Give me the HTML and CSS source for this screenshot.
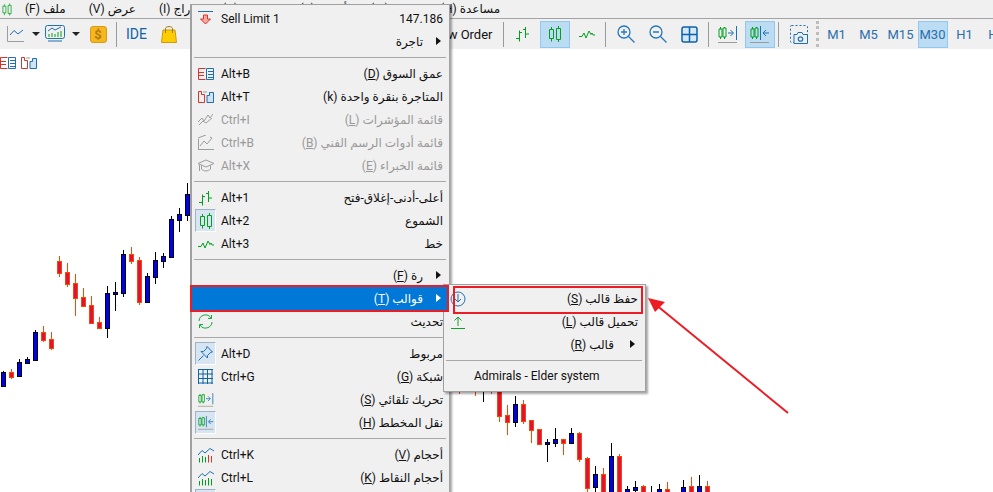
FILE: index.html
```html
<!DOCTYPE html>
<html lang="ar">
<head>
    <meta charset="UTF-8">
    <meta name="viewport" content="width=device-width, initial-scale=1.0">
    <title>MetaTrader</title>
    <link rel="stylesheet" href="styles.css">
</head>
<body>
<svg class="defs" width="0" height="0">
    <symbol id="i-bars" viewBox="0 0 16 16"><path class="g" d="M4.5 4.5V15.5M1 12.5H4.5M4.5 6.5H7M10.5 1V12M8 3.5H10.5M10.5 8H14"/></symbol>
    <symbol id="i-candles" viewBox="0 0 16 16"><path class="g" d="M4.5 1V3.5M4.5 12.5V15.5M11.5 0V2.5M11.5 13.5V16M2.5 3.5H6.5V12.5H2.5ZM9.5 2.5H13.5V13.5H9.5Z"/></symbol>
    <symbol id="i-line" viewBox="0 0 16 16"><path class="g" d="M0 10.5H3L5 7L7 12L10 5L12 8.5L13 7L14 9H16"/></symbol>
    <symbol id="i-shift" viewBox="0 0 20 18"><path class="g" d="M2.500 2V4M2.500 12V14M6.500 2V3M6.500 12V14M1 4H4V12H1ZM5 3H8V12H5Z"/><path class="b" d="M10 8H15M12.500 5L15.500 8L12.500 11M18.500 1V15"/><path class="s" d="M0 17.500H19"/></symbol>
    <symbol id="i-auto" viewBox="0 0 20 18"><path class="g" d="M2.500 2V4M2.500 12V14M6.500 2V3M6.500 12V14M1 4H4V12H1ZM5 3H8V12H5Z"/><path class="b" d="M10.500 1V15M19 8H13.500M16 5L13 8L16 11"/><path class="s" d="M0 17.500H19"/></symbol>
    <symbol id="i-depth" viewBox="0 0 16 12"><path class="r" d="M7.500 .5H.5V11.500H7.500M.5 4.500H6M.5 7.500H6"/><path class="b" d="M8.500 .5H15.500V11.500H8.500ZM10 3.500H15M10 6.500H15M10 9.500H15"/></symbol>
    <symbol id="i-click" viewBox="0 0 16 12"><path class="r" d="M.5 .5H3.500V3.500H6.500V11.500H.5Z"/><path class="fb" d="M9 11.500V4.500H11.500V1.500H15.500V11.500Z"/><path class="s" d="M5 1H9"/></symbol>
    <symbol id="i-volume" viewBox="0 0 16 16"><path class="b" d="M0 8L4 3.500L7 6L12 1.500L16 4"/><path class="g" d="M1.500 15.500V11M4.500 15.500V9M7.500 15.500V10"/><path class="r" d="M10.500 15.500V8M13.500 15.500V9"/></symbol>
    <symbol id="i-volume-g" viewBox="0 0 16 16"><path class="b" d="M0 8L4 3.500L7 6L12 1.500L16 4"/><path class="g" d="M1.500 15.500V11M4.500 15.500V9M7.500 15.500V10M10.500 15.500V8M13.500 15.500V9"/></symbol>
</svg>

<div class="app">
    <div class="menubar">
        <svg class="menubar-icon" width="12" height="13"><use href="#i-candles"/></svg>
        <span dir="rtl">ملف (F)</span>
        <span dir="rtl">عرض (V)</span>
        <span dir="rtl">إدراج (I)</span>
        <span dir="rtl">مخطط (C)</span>
        <span dir="rtl">أدوات (T)</span>
        <span dir="rtl">نوافذ (W)</span>
        <span dir="rtl" class="help">مساعدة (H)</span>
    </div>

    <div class="toolbar">
        <div class="toolbar-left">
            <button class="tool tool-caret">
                <svg width="18" height="16" viewBox="0 0 18 16"><path class="s" d="M.5 0V15.500H17"/><path class="b" d="M3 9L7 4.500L11 8L16 4"/></svg>
                <i class="caret"></i>
            </button>
            <button class="tool tool-caret">
                <svg width="20" height="18" viewBox="0 0 20 18"><rect class="b" x=".5" y=".5" width="19" height="13" rx="2"/><path class="b" d="M3 6L7 3L10 5L16 2M3 16H17"/><path class="g" d="M4 12V9M7 12V8M10 12V9M13 12V7M16 12V6"/></svg>
                <i class="caret"></i>
            </button>
            <button class="tool"><span class="coin">$</span></button>
            <span class="sep"></span>
            <button class="tool tool-text">IDE</button>
            <button class="tool">
                <svg width="16" height="18" viewBox="0 0 16 18"><path d="M2 5H14L15.500 17.500H.5Z" fill="#ffcc00" stroke="#c99a10"/><path d="M4.500 8V3.500C4.500 1 11.500 1 11.500 3.500V8" fill="none" stroke="#9a7b10"/></svg>
            </button>
            <span class="new-order">New Order</span>
        </div>
        <span class="sep"></span>
        <button class="tool"><svg width="16" height="16"><use href="#i-bars"/></svg></button>
        <button class="tool active"><svg width="16" height="16"><use href="#i-candles"/></svg></button>
        <button class="tool"><svg width="18" height="16"><use href="#i-line"/></svg></button>
        <span class="sep"></span>
        <button class="tool">
            <svg width="18" height="18" viewBox="0 0 18 18"><circle class="mag" cx="7" cy="7" r="6"/><path class="mag" d="M4 7H10M7 4V10M11.500 11.500L17.500 17.500"/></svg>
        </button>
        <button class="tool">
            <svg width="18" height="18" viewBox="0 0 18 18"><circle class="mag" cx="7" cy="7" r="6"/><path class="mag" d="M4 7H10M11.500 11.500L17.500 17.500"/></svg>
        </button>
        <button class="tool">
            <svg width="17" height="17" viewBox="0 0 17 17"><rect x="1" y="1" width="15" height="15" rx="2" fill="#d3e8f8" stroke="#0f62a5" stroke-width="1.500"/><path d="M8.500 1V16M1 8.500H16" stroke="#0f62a5" stroke-width="1.500"/></svg>
        </button>
        <span class="sep"></span>
        <button class="tool"><svg width="20" height="18"><use href="#i-shift"/></svg></button>
        <button class="tool active"><svg width="20" height="18"><use href="#i-auto"/></svg></button>
        <span class="sep"></span>
        <button class="tool">
            <svg width="18" height="19" viewBox="0 0 18 19"><rect x=".5" y=".5" width="17" height="17" rx="1" fill="none" stroke="#1f6fb2" stroke-dasharray="2 2"/><path d="M4 18.500V9.500H7L8 7.500H12L13 9.500H17.500V18.500Z" fill="#f0f0f0" stroke="#1f6fb2"/><circle class="mag" cx="10.500" cy="14" r="2.200"/></svg>
        </button>
        <span class="grip"></span>
        <button class="tool tool-period">M1</button>
        <button class="tool tool-period">M5</button>
        <button class="tool tool-period">M15</button>
        <button class="tool tool-period active">M30</button>
        <button class="tool tool-period">H1</button>
        <button class="tool tool-period">H4</button>
    </div>

    <div class="chart">
        <div class="chart-tools">
            <svg width="16" height="12"><use href="#i-depth"/></svg>
            <svg width="16" height="12"><use href="#i-click"/></svg>
        </div>
        <svg id="candles" class="candles" viewBox="0 49 993 443"></svg>
    </div>

    <div class="menu">
        <div class="row">
            <span class="row-icon">
                <svg width="16" height="16" viewBox="0 0 16 16"><path d="M0 .5H15" stroke="#1f6fb2"/><path d="M5.500 4H9.500V8H12.500L7.500 13L2.500 8H5.500Z" fill="#f7a8a0" stroke="#d9342b"/></svg>
            </span>
            <span class="row-key">Sell Limit 1</span>
            <span class="row-label">147.186</span>
        </div>
        <div class="row row-sub"><span class="row-icon"></span><span class="row-key"></span><span class="row-label" dir="rtl">تاجرة</span></div>
        <div class="menu-sep"></div>

        <div class="row">
            <span class="row-icon"><svg width="16" height="12"><use href="#i-depth"/></svg></span>
            <span class="row-key">Alt+B</span>
            <span class="row-label" dir="rtl">عمق السوق (<u>D</u>)</span>
        </div>
        <div class="row">
            <span class="row-icon"><svg width="16" height="12"><use href="#i-click"/></svg></span>
            <span class="row-key">Alt+T</span>
            <span class="row-label" dir="rtl">المتاجرة بنقرة واحدة (k)</span>
        </div>
        <div class="row disabled">
            <span class="row-icon">
                <svg width="15" height="13" viewBox="0 0 15 13"><path class="s" d="M0 9L4 5L6 8L10 2L12 5L15 1M1 12L5 8L8 10L14 5"/></svg>
            </span>
            <span class="row-key">Ctrl+I</span>
            <span class="row-label" dir="rtl">قائمة المؤشرات (<u>L</u>)</span>
        </div>
        <div class="row disabled">
            <span class="row-icon">
                <svg width="16" height="15" viewBox="0 0 16 15"><path class="s" d="M0 3L8 0M.5 4V14.500M0 14.500H16M2 11L6 6L9 9L14 3L12 2"/></svg>
            </span>
            <span class="row-key">Ctrl+B</span>
            <span class="row-label" dir="rtl">قائمة أدوات الرسم الفني (<u>B</u>)</span>
        </div>
        <div class="row disabled">
            <span class="row-icon">
                <svg width="16" height="14" viewBox="0 0 16 14"><path class="s" d="M0 4.500L8 1L16 4.500L8 8ZM3.500 6.500V10C5 12.500 11 12.500 12.500 10V6.500M1.500 5.500V12"/></svg>
            </span>
            <span class="row-key">Alt+X</span>
            <span class="row-label" dir="rtl">قائمة الخبراء (<u>E</u>)</span>
        </div>
        <div class="menu-sep"></div>

        <div class="row">
            <span class="row-icon"><svg width="16" height="16"><use href="#i-bars"/></svg></span>
            <span class="row-key">Alt+1</span>
            <span class="row-label" dir="rtl">أعلى-أدنى-إغلاق-فتح</span>
        </div>
        <div class="row">
            <span class="row-icon on"><svg width="16" height="16"><use href="#i-candles"/></svg></span>
            <span class="row-key">Alt+2</span>
            <span class="row-label" dir="rtl">الشموع</span>
        </div>
        <div class="row">
            <span class="row-icon"><svg width="16" height="16"><use href="#i-line"/></svg></span>
            <span class="row-key">Alt+3</span>
            <span class="row-label" dir="rtl">خط</span>
        </div>
        <div class="menu-sep"></div>

        <div class="row row-sub"><span class="row-icon"></span><span class="row-key"></span><span class="row-label" dir="rtl">رة (<u>F</u>)</span></div>
        <div class="row row-sub selected"><span class="row-icon"></span><span class="row-key"></span><span class="row-label" dir="rtl">قوالب (<u>T</u>)</span></div>
        <div class="row">
            <span class="row-icon">
                <svg width="15" height="15" viewBox="0 0 15 15"><path d="M1 7A6.500 6.500 0 0 1 13 4M14 8A6.500 6.500 0 0 1 2 11M13.500 1V4.500H10M1.500 14V10.500H5" fill="none" stroke="#18a83c"/></svg>
            </span>
            <span class="row-key"></span>
            <span class="row-label" dir="rtl">تحديث</span>
        </div>
        <div class="menu-sep"></div>

        <div class="row">
            <span class="row-icon on">
                <svg width="15" height="15" viewBox="0 0 15 15"><path d="M9 .5L14.500 6L12.500 6.500L9.500 9.500L9.500 12L3 5.500L5.500 5.500L8.500 2.500ZM5.500 9.500L.5 14.500" fill="#cfe3f5" stroke="#1f6fb2"/></svg>
            </span>
            <span class="row-key">Alt+D</span>
            <span class="row-label" dir="rtl">مربوط</span>
        </div>
        <div class="row">
            <span class="row-icon">
                <svg width="15" height="15" viewBox="0 0 15 15"><path d="M0 .5H15M0 5H15M0 9.500H15M0 14H15M.5 0V15M5 0V15M9.500 0V15M14 0V15" stroke="#0f62a5"/></svg>
            </span>
            <span class="row-key">Ctrl+G</span>
            <span class="row-label" dir="rtl">شبكة (<u>G</u>)</span>
        </div>
        <div class="row">
            <span class="row-icon"><svg width="16" height="15"><use href="#i-shift"/></svg></span>
            <span class="row-key"></span>
            <span class="row-label" dir="rtl">تحريك تلقائي (<u>S</u>)</span>
        </div>
        <div class="row">
            <span class="row-icon on"><svg width="16" height="15"><use href="#i-auto"/></svg></span>
            <span class="row-key"></span>
            <span class="row-label" dir="rtl">نقل المخطط (<u>H</u>)</span>
        </div>
        <div class="menu-sep"></div>

        <div class="row">
            <span class="row-icon"><svg width="16" height="16"><use href="#i-volume"/></svg></span>
            <span class="row-key">Ctrl+K</span>
            <span class="row-label" dir="rtl">أحجام (<u>V</u>)</span>
        </div>
        <div class="row">
            <span class="row-icon"><svg width="16" height="16"><use href="#i-volume-g"/></svg></span>
            <span class="row-key">Ctrl+L</span>
            <span class="row-label" dir="rtl">أحجام النقاط (<u>K</u>)</span>
        </div>
        <div class="row"><span class="row-icon on"></span></div>
    </div>

    <div class="menu submenu">
        <div class="row">
            <span class="row-icon">
                <svg width="16" height="16" viewBox="0 0 16 16"><circle cx="8" cy="8" r="7" fill="none" stroke="#1f6fb2"/><path d="M8 3V11M5 8L8 11L11 8" fill="none" stroke="#1f6fb2"/></svg>
            </span>
            <span class="row-key"></span>
            <span class="row-label" dir="rtl">حفظ قالب (<u>S</u>)</span>
        </div>
        <div class="row">
            <span class="row-icon">
                <svg width="14" height="14" viewBox="0 0 14 14"><path d="M7 11V2M3.500 5.500L7 2L10.500 5.500M0 13.500H14" fill="none" stroke="#12a02c"/></svg>
            </span>
            <span class="row-key"></span>
            <span class="row-label" dir="rtl">تحميل قالب (<u>L</u>)</span>
        </div>
        <div class="row row-sub"><span class="row-icon"></span><span class="row-key"></span><span class="row-label" dir="rtl">قالب (<u>R</u>)</span></div>
        <div class="menu-sep"></div>
        <div class="row row-plain">Admirals - Elder system</div>
    </div>

    <svg class="marks" viewBox="0 0 993 492">
        <rect x="191" y="286" width="257" height="25"/>
        <rect x="454" y="287" width="188" height="26"/>
        <path d="M788 413L655 304"/>
        <polygon points="648,298 665,302 655,312"/>
    </svg>
</div>

<script src="chart.js"></script>
</body>
</html>
```

FILE: styles.css
```css
* {
    box-sizing: border-box;
}

body {
    margin: 0;
    background: white;
    font-family: Roboto, "DejaVu Sans", sans-serif;
    font-size: 12px;
    color: #111;
}

.defs {
    position: absolute;
}

.app {
    position: relative;
    width: 993px;
    height: 492px;
    overflow: hidden;
    display: flex;
    flex-direction: column;
}

svg {
    display: block;
}

/* colours shared by the drawn icons */
.g, .b, .r, .s, .mag {
    fill: none;
}
.g { stroke: #00a01e; }
.b { stroke: #1f6fb2; }
.r { stroke: #d9342b; }
.s { stroke: #9c9c9c; }
.mag { stroke: #2a77b5; stroke-width: 1.3; }
.fb { fill: #cfe3f5; stroke: #1f6fb2; }

.menubar {
    height: 19px;
    flex-shrink: 0;
    display: flex;
    align-items: center;
    gap: 23px;
    padding-left: 1px;
    background: #f0f0f0;
    border-bottom: 1px solid #a3a3a3;
    white-space: nowrap;
    line-height: 18px;
}

.menubar-icon {
    margin-right: -11px;
}

.toolbar {
    height: 30px;
    flex-shrink: 0;
    display: flex;
    align-items: center;
    background: #f0f0f0;
    white-space: nowrap;
}

.toolbar-left {
    flex: 0 0 500.5px;
    display: flex;
    align-items: center;
    padding-left: 4px;
}

.tool {
    flex-shrink: 0;
    width: 30px;
    height: 27px;
    margin: 0 1px;
    padding: 0;
    display: flex;
    align-items: center;
    justify-content: center;
    gap: 7px;
    background: none;
    border: 1px solid transparent;
    font: inherit;
}

.tool.active {
    background: #bcdcf4;
    border-color: #90c8f0;
}

.tool-caret {
    width: 37px;
}

.tool-text {
    color: #0f62a5;
    font-size: 14px;
}

.tool-period {
    color: #2b6ea8;
    font-size: 13px;
}

.caret {
    width: 0;
    height: 0;
    border: 4px solid transparent;
    border-top: 4px solid #222;
    border-bottom: 0;
}

.coin {
    width: 17px;
    height: 17px;
    line-height: 16px;
    text-align: center;
    background: #f6b61e;
    border: 1px solid #d79a14;
    border-radius: 3px;
    color: #b27a10;
    font-weight: bold;
    font-size: 13px;
}

.new-order {
    margin-left: auto;
    padding-right: 8px;
    font-size: 13px;
}

.sep {
    flex-shrink: 0;
    width: 1px;
    height: 25px;
    margin: 0 3.5px 0 2px;
    background: #9a9a9a;
}

.grip {
    flex-shrink: 0;
    height: 26px;
    margin: 0 2px 0 1px;
    border-left: 3px dotted #bdbdbd;
}

.chart {
    position: relative;
    flex: 1;
    background: white;
}

.chart-tools {
    position: absolute;
    left: 0;
    top: 8px;
    display: flex;
    gap: 5px;
}

.candles {
    width: 993px;
    height: 443px;
}

/* popup menus */
.menu {
    position: absolute;
    left: 190px;
    top: 4px;
    width: 260px;
    padding: 2px 0 3px;
    background: #f0f0f0;
    border: 1px solid #a0a0a0;
    border-left-width: 2px;
    box-shadow: 2px 2px 2px rgba(0, 0, 0, 0.35);
}

.submenu {
    left: 443px;
    top: 284px;
    width: 203px;
    height: 108px;
    z-index: 2;
    border-left-width: 1px;
}

.row {
    height: 23px;
    display: grid;
    grid-template-columns: 26px auto 1fr;
    align-items: center;
    padding: 0 6px 0 3px;
    white-space: nowrap;
}

.row-icon {
    width: 21px;
    height: 23px;
    display: flex;
    align-items: center;
    justify-content: center;
}

.row-icon.on {
    background: #d7e5f2;
    border: 1px solid;
    border-color: #9db3c8 #fff #fff #9db3c8;
}

.row-label {
    text-align: right;
}

.row-sub {
    position: relative;
    padding-right: 26px;
}

.row-sub::after {
    content: "";
    position: absolute;
    right: 8px;
    top: 7px;
    border: 4px solid transparent;
    border-left: 5px solid #111;
    border-right: 0;
}

.submenu .row {
    padding-right: 7px;
}

.submenu .row-sub {
    padding-right: 31px;
}

.submenu .row-sub::after {
    right: 10px;
}

.row.disabled {
    color: #999;
}

.row.selected {
    position: relative;
    z-index: 3;
    margin-right: 2px;
    padding-right: 24px;
    background: #0078d7;
    color: white;
}

.row.selected::after {
    right: 6px;
    border-left-color: white;
}

.row-plain {
    display: block;
    padding-left: 30px;
    line-height: 23px;
    color: #111;
}

.menu-sep {
    height: 1px;
    margin: 4px 3px 4px 2px;
    background: #a8a8a8;
}

/* red notes drawn over the shot */
.marks {
    position: absolute;
    left: 0;
    top: 0;
    z-index: 4;
    width: 993px;
    height: 492px;
    pointer-events: none;
}

.marks rect {
    fill: none;
    stroke: #ed1c24;
    stroke-width: 2;
}

.marks path {
    fill: none;
    stroke: #ed1c24;
    stroke-width: 2;
}

.marks polygon {
    fill: #ed1c24;
}

.wick-up { stroke: black; }
.body-up { stroke: black; fill: #0000f0; }
.wick-down { stroke: #ff4500; }
.body-down { stroke: #ff4500; fill: #dc143c; }
```

FILE: chart.js
```js
// x, wick top, body top, body bottom, wick bottom, up or down
const bars = [
    [3.5, 371, 372, 386, 387, 1], [11.5, 369, 372, 377, 379, 0], [19.5, 359, 362, 376, 377, 1],
    [27.5, 357, 359, 363, 363, 1], [35.5, 330, 332, 360, 360, 1], [43.5, 326, 332, 340, 342, 0],
    [51.5, 332, 339, 348, 350, 0], [59.5, 256, 261, 273, 277, 0], [67.5, 263, 272, 284, 287, 0],
    [75.5, 274, 283, 298, 316, 0], [83.5, 288, 297, 306, 307, 0], [91.5, 296, 305, 323, 324, 0],
    [99.5, 317, 322, 328, 328, 0], [107.5, 286, 293, 328, 338, 1], [115.5, 282, 292, 294, 311, 1],
    [123.5, 250, 254, 293, 297, 1], [131.5, 247, 254, 261, 264, 0], [139.5, 257, 260, 302, 305, 0],
    [147.5, 273, 276, 302, 303, 1], [155.5, 252, 260, 277, 284, 1], [163.5, 253, 256, 261, 268, 1],
    [171.5, 216, 219, 257, 257, 1], [179.5, 208, 214, 220, 232, 1], [187.5, 183, 194, 215, 221, 1],
    [459.5, 360, 370, 385, 394, 0], [475.5, 370, 375, 388, 396, 0], [483.5, 370, 375, 390, 402, 1],
    [491.5, 370, 375, 388, 394, 0], [499.5, 370, 375, 416, 422, 0], [507.5, 405, 415, 422, 435, 0],
    [515.5, 396, 404, 422, 427, 1], [523.5, 400, 404, 421, 424, 0], [531.5, 420, 420, 430, 443, 0],
    [539.5, 429, 429, 444, 445, 0], [547.5, 439, 442, 444, 462, 1], [555.5, 428, 439, 443, 447, 1],
    [563.5, 439, 439, 443, 455, 0], [571.5, 428, 433, 443, 444, 1], [579.5, 432, 433, 459, 462, 0],
    [587.5, 457, 458, 488, 500, 0], [595.5, 466, 474, 487, 500, 1], [603.5, 468, 474, 500, 500, 0],
    [611.5, 443, 456, 500, 500, 1], [619.5, 454, 456, 500, 500, 0], [627.5, 486, 489, 500, 500, 1],
    [635.5, 481, 487, 490, 500, 1], [643.5, 485, 486, 500, 500, 0], [651.5, 486, 500, 502, 504, 1],
    [659.5, 484, 489, 500, 500, 1], [667.5, 482, 489, 500, 500, 0], [683.5, 480, 487, 500, 500, 1],
    [691.5, 477, 486, 500, 500, 0], [699.5, 475, 486, 500, 500, 1], [707.5, 481, 486, 500, 500, 0]
];

const NS = 'http://www.w3.org/2000/svg';
const chart = document.getElementById('candles');

function add(tag, attrs) {
    const el = document.createElementNS(NS, tag);
    Object.keys(attrs).forEach(k => el.setAttribute(k, attrs[k]));
    chart.appendChild(el);
}

bars.forEach(([x, high, top, bottom, low, up]) => {
    const kind = up ? 'up' : 'down';
    add('path', { d: `M${x} ${high}V${low}`, class: `wick-${kind}` });
    add('rect', { x: x - 2, y: top + 0.5, width: 4, height: bottom - top, class: `body-${kind}` });
});
```
